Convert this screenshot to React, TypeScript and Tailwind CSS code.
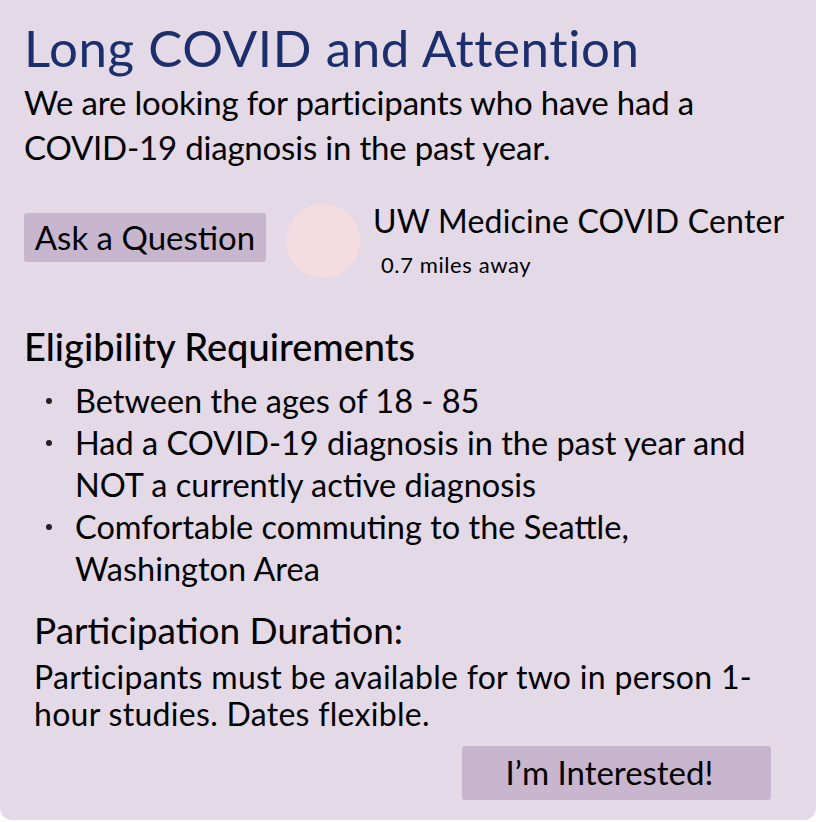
export default function App() {
  const bullets = [
    ["Between the ages of 18 - 85"],
    ["Had a COVID-19 diagnosis in the past year and", "NOT a currently active diagnosis"],
    ["Comfortable commuting to the Seattle,", "Washington Area"],
  ]

  return (
    <div className="min-h-[822px] w-[816px] bg-white font-['Lato',sans-serif] text-black">
      <div className="h-[820px] rounded-b-[12px] bg-[#e3d9e7] pl-[24px] pr-[20px] pt-[18px]">
        <h1 className="text-[51px] leading-[60px] tracking-[0.6px] text-[#1c2f6c]">
          Long COVID and Attention
        </h1>
        <p className="mt-[2px] text-[33px] leading-[45px] tracking-[-0.2px]">
          We are looking for participants who have had a
          <br />
          COVID-19 diagnosis in the past year.
        </p>

        <div className="mt-[34px] flex items-start">
          <button className="mt-[9px] h-[49px] w-[242px] rounded-[3px] bg-[#c8b6cf] text-[33px]">
            Ask a Question
          </button>
          <div className="ml-[20px] h-[74px] w-[74px] rounded-full bg-[#f3dde0]" />
          <div className="ml-[13px] -mt-[3px]">
            <div className="text-[32px] leading-[40px] tracking-[0.2px]">UW Medicine COVID Center</div>
            <div className="ml-[8px] mt-[12px] text-[22px] leading-[24px] tracking-[0.6px]">0.7 miles away</div>
          </div>
        </div>

        <h2 className="mt-[46px] text-[38px] leading-[44px] font-medium">Eligibility Requirements</h2>
        <ul className="mt-[12px] text-[32.5px] leading-[42px]">
          {bullets.map((lines, i) => (
            <li key={i} className="flex">
              <span className="flex h-[42px] w-[51px] items-center pl-[22px]">
                <span className="h-[6px] w-[6px] rounded-full bg-[#222]" />
              </span>
              <span>
                {lines.map((l, j) => (
                  <div key={j}>{l}</div>
                ))}
              </span>
            </li>
          ))}
        </ul>

        <div className="mt-[20px] pl-[10px]">
          <h3 className="text-[37px] leading-[40px]">Participation Duration:</h3>
          <p className="mt-[8px] text-[32px] leading-[37px] tracking-[0.3px]">
            Participants must be available for two in person 1-
            <br />
            hour studies. Dates flexible.
          </p>
        </div>

        <div className="mt-[14px] flex justify-end pr-[25px]">
          <button className="h-[54px] w-[309px] rounded-[3px] bg-[#c8b6cf] pr-[14px] text-[33px]">
            I’m Interested!
          </button>
        </div>
      </div>
    </div>
  )
}
